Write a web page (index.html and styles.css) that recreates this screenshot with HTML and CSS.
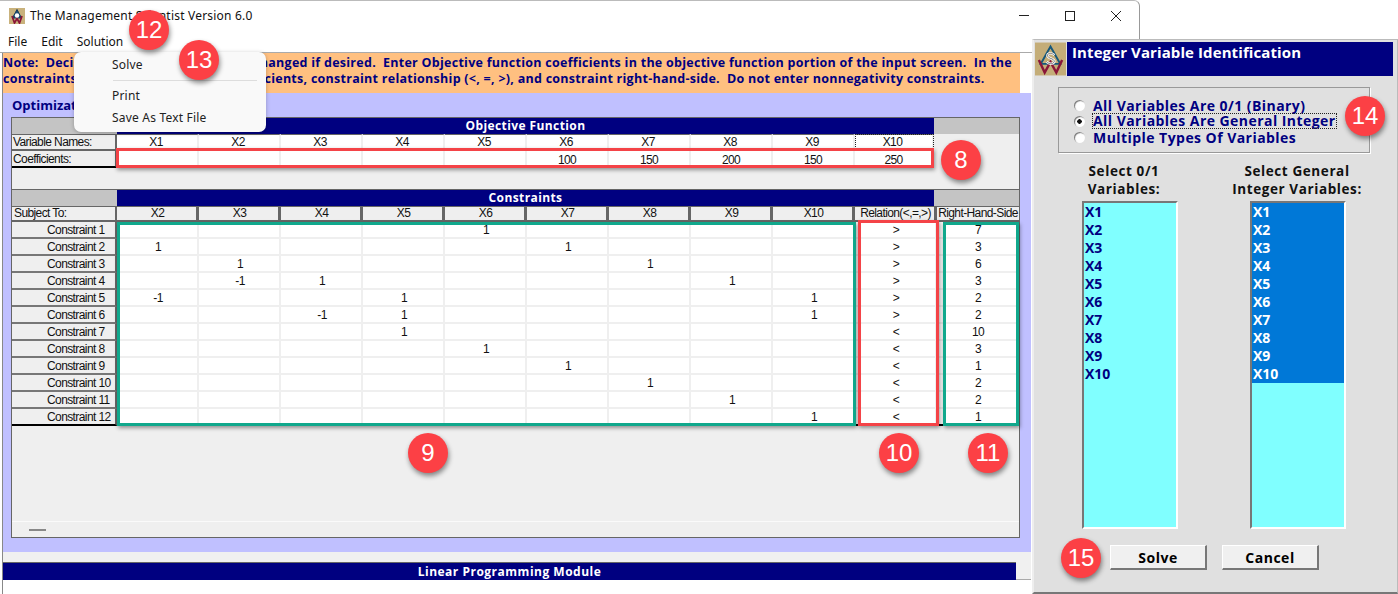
FILE: index.html
```html
<!DOCTYPE html>
<html lang="en">
<head>
<meta charset="UTF-8">
<meta name="viewport" content="width=device-width, initial-scale=1.0">
<title>The Management Scientist Version 6.0</title>
<link rel="stylesheet" href="styles.css">
</head>
<body>
    <div class="window">
        <div class="titlebar">
            <svg class="logo-small" viewBox="0 0 32 32"><rect width="32" height="32" fill="#c9b27c"/><path d="M16 3 L25 20 H7 Z" fill="#1d4f78" stroke="#12385a" stroke-width="2"/><path d="M6 16 L11 30 L16 21 L21 30 L26 16" fill="none" stroke="#8a1538" stroke-width="3.5"/><circle cx="16" cy="15" r="4.5" fill="#fff"/></svg>
            <span class="title-text">The Management Scientist Version 6.0</span>
            <div class="controls">
                <span class="ctl-min"></span>
                <span class="ctl-max"></span>
                <svg class="ctl-close" viewBox="0 0 10 10"><path d="M0 0 L10 10 M10 0 L0 10" stroke="#222" stroke-width="1" fill="none"/></svg>
            </div>
        </div>
        <div class="menubar">
            <span class="menu-file">File</span>
            <span class="menu-edit">Edit</span>
            <span>Solution</span>
        </div>
        <div class="content">
            <div class="note">
                <p>Note:&nbsp; Decision variable names can be changed if desired.&nbsp; Enter Objective function coefficients in the objective function portion of the input screen.&nbsp; In the</p>
                <p>constraints portion enter variable coefficients, constraint relationship (&lt;, =, &gt;), and constraint right-hand-side.&nbsp; Do not enter nonnegativity constraints.</p>
            </div>
            <div class="lavender">
                <div class="opt-title">Optimization</div>
                <div class="panel">
                    <div class="band"><span class="band-gray"></span><span class="band-navy">Objective Function</span><span class="band-rest"></span></div>
                    <table class="sheet obj">
                        <tr><th class="lead">Variable Names:</th><td>X1</td><td>X2</td><td>X3</td><td>X4</td><td>X5</td><td>X6</td><td>X7</td><td>X8</td><td>X9</td><td class="focus">X10</td><th class="rest"></th></tr>
                        <tr class="last"><th class="lead">Coefficients:</th><td></td><td></td><td></td><td></td><td></td><td>100</td><td>150</td><td>200</td><td>150</td><td>250</td><th class="rest"></th></tr>
                    </table>
                    <div class="gap"></div>
                    <div class="band"><span class="band-gray"></span><span class="band-navy">Constraints</span><span class="band-rest"></span></div>
                    <table class="sheet cons">
                        <tr class="head"><th class="lead">Subject To:</th><th>X2</th><th>X3</th><th>X4</th><th>X5</th><th>X6</th><th>X7</th><th>X8</th><th>X9</th><th>X10</th><th>Relation(&lt;,=,&gt;)</th><th class="rhs">Right-Hand-Side</th></tr>
                        <tr><th class="name">Constraint 1</th><td></td><td></td><td></td><td></td><td>1</td><td></td><td></td><td></td><td></td><td>&gt;</td><td>7</td></tr>
                        <tr><th class="name">Constraint 2</th><td>1</td><td></td><td></td><td></td><td></td><td>1</td><td></td><td></td><td></td><td>&gt;</td><td>3</td></tr>
                        <tr><th class="name">Constraint 3</th><td></td><td>1</td><td></td><td></td><td></td><td></td><td>1</td><td></td><td></td><td>&gt;</td><td>6</td></tr>
                        <tr><th class="name">Constraint 4</th><td></td><td>-1</td><td>1</td><td></td><td></td><td></td><td></td><td>1</td><td></td><td>&gt;</td><td>3</td></tr>
                        <tr><th class="name">Constraint 5</th><td>-1</td><td></td><td></td><td>1</td><td></td><td></td><td></td><td></td><td>1</td><td>&gt;</td><td>2</td></tr>
                        <tr><th class="name">Constraint 6</th><td></td><td></td><td>-1</td><td>1</td><td></td><td></td><td></td><td></td><td>1</td><td>&gt;</td><td>2</td></tr>
                        <tr><th class="name">Constraint 7</th><td></td><td></td><td></td><td>1</td><td></td><td></td><td></td><td></td><td></td><td>&lt;</td><td>10</td></tr>
                        <tr><th class="name">Constraint 8</th><td></td><td></td><td></td><td></td><td>1</td><td></td><td></td><td></td><td></td><td>&lt;</td><td>3</td></tr>
                        <tr><th class="name">Constraint 9</th><td></td><td></td><td></td><td></td><td></td><td>1</td><td></td><td></td><td></td><td>&lt;</td><td>1</td></tr>
                        <tr><th class="name">Constraint 10</th><td></td><td></td><td></td><td></td><td></td><td></td><td>1</td><td></td><td></td><td>&lt;</td><td>2</td></tr>
                        <tr><th class="name">Constraint 11</th><td></td><td></td><td></td><td></td><td></td><td></td><td></td><td>1</td><td></td><td>&lt;</td><td>2</td></tr>
                        <tr class="last"><th class="name">Constraint 12</th><td></td><td></td><td></td><td></td><td></td><td></td><td></td><td></td><td>1</td><td>&lt;</td><td>1</td></tr>
                    </table>
                    <div class="panel-foot"><div class="foot-strip"><span class="minus"></span></div></div>
                </div>
            </div>
            <div class="status-wrap">
                <div class="status">Linear Programming Module</div>
            </div>
        </div>
    </div>

    <!-- dropdown from the Solution menu -->
    <div class="dropdown">
        <div class="drop-item">Solve</div>
        <div class="drop-line"></div>
        <div class="drop-item">Print</div>
        <div class="drop-item">Save As Text File</div>
    </div>

    <!-- second window -->
    <div class="dialog">
        <div class="dlg-head">
            <svg class="logo-big" viewBox="0 0 32 34"><rect width="32" height="34" fill="#c4ad78"/><path d="M16 4 L26 22 H6 Z" fill="none" stroke="#17587a" stroke-width="2"/><path d="M4 18 L10 31 L16 20 L22 31 L28 18" fill="none" stroke="#8a1538" stroke-width="2.5"/><path d="M20 13 C17 10 12 11 13 14 C14 17 19 16 20 19 C20 22 15 23 12 20" fill="none" stroke="#fff" stroke-width="2.5"/><path d="M20 13 C17 10 12 11 13 14 C14 17 19 16 20 19 C20 22 15 23 12 20" fill="none" stroke="#222" stroke-width="0.6"/></svg>
            <div class="dlg-title">Integer Variable Identification</div>
        </div>
        <div class="group">
            <label class="opt"><input type="radio" name="kind"><span>All Variables Are 0/1 (Binary)</span></label>
            <label class="opt"><input type="radio" name="kind" checked><span class="dotted">All Variables Are General Integer</span></label>
            <label class="opt"><input type="radio" name="kind"><span>Multiple Types Of Variables</span></label>
        </div>
        <div class="lists">
            <div class="list-col">
                <div class="list-label">Select 0/1<br>Variables:</div>
                <ul class="list">
                    <li>X1</li><li>X2</li><li>X3</li><li>X4</li><li>X5</li><li>X6</li><li>X7</li><li>X8</li><li>X9</li><li>X10</li>
                </ul>
            </div>
            <div class="list-col">
                <div class="list-label">Select General<br>Integer Variables:</div>
                <ul class="list picked">
                    <li>X1</li><li>X2</li><li>X3</li><li>X4</li><li>X5</li><li>X6</li><li>X7</li><li>X8</li><li>X9</li><li>X10</li>
                </ul>
            </div>
        </div>
        <div class="buttons">
            <button class="btn">Solve</button>
            <button class="btn">Cancel</button>
        </div>
    </div>

    <!-- annotations drawn over the screenshot -->
    <div class="box red box-coef"></div>
    <div class="box green box-cells"></div>
    <div class="box red box-rel"></div>
    <div class="box green box-rhs"></div>
    <div class="badge b12">12</div>
    <div class="badge b13">13</div>
    <div class="badge b8">8</div>
    <div class="badge b9">9</div>
    <div class="badge b10">10</div>
    <div class="badge b11">11</div>
    <div class="badge b14">14</div>
    <div class="badge b15">15</div>
</body>
</html>
```
FILE: styles.css
```css
* {
    box-sizing: border-box;
}
html, body {
    margin: 0;
    height: 594px;
    overflow: hidden;
    background-color: white;
}
body {
    position: relative;
    font-family: "Liberation Sans", Arial, sans-serif;
}

/* main window */
.window {
    width: 1140px;
    height: 594px;
    border-top: 1px solid #bbb;
    border-right: 1px solid #999;
    border-top-right-radius: 6px;
    background-color: white;
    display: flex;
    flex-direction: column;
}
.titlebar {
    height: 29px;
    flex: none;
    display: flex;
    align-items: center;
    padding-left: 9px;
}
.logo-small {
    width: 16px;
    height: 16px;
    margin-right: 5px;
}
.title-text {
    font-family: "Noto Sans", sans-serif;
    font-size: 12px;
    letter-spacing: 0.2px;
    color: #111;
}
.controls {
    margin-left: auto;
    display: flex;
    align-items: center;
}
.ctl-min {
    width: 10px;
    height: 1px;
    background-color: #222;
    margin-right: 36px;
}
.ctl-max {
    width: 10px;
    height: 10px;
    border: 1px solid #222;
    margin-right: 36px;
}
.ctl-close {
    width: 10px;
    height: 10px;
    margin-right: 18px;
}
.menubar {
    height: 23px;
    flex: none;
    display: flex;
    align-items: center;
    padding-left: 8px;
    font-family: "Noto Sans", sans-serif;
    font-size: 12px;
    color: #111;
    border-bottom: 1px solid #aaa;
}
.menu-file {
    margin-right: 14px;
}
.menu-edit {
    margin-right: 14px;
}

.content {
    flex: 1;
    margin-left: 2px;
    display: flex;
    flex-direction: column;
    background-color: white;
    border-left: 1px solid #888;
}
.note {
    height: 40px;
    width: 1017px;
    background-color: #ffc080;
    color: #000080;
    font-family: "Open Sans", sans-serif;
    font-weight: bold;
    font-size: 12.5px;
    letter-spacing: 0.27px;
    line-height: 16px;
    padding: 2px 0 0 0;
    white-space: nowrap;
    overflow: hidden;
}
.note p {
    margin: 0;
}
.lavender {
    height: 459px;
    width: 1028px;
    background-color: #c0c0ff;
    padding: 0 0 0 8px;
}
.opt-title {
    height: 24px;
    padding: 3px 0 0 1px;
    color: #000080;
    font-family: "Open Sans", sans-serif;
    font-weight: bold;
    font-size: 13px;
}

/* the input sheet */
.panel {
    width: 1009px;
    height: 421px;
    border: 1px solid #666;
    background-color: #efefef;
    color: #111;
}
.band {
    display: flex;
    height: 16px;
}
.band-gray {
    width: 105px;
    background-color: #c4c4c4;
}
.band-navy {
    width: 817px;
    background-color: #000080;
    color: white;
    font-family: "Open Sans", sans-serif;
    font-weight: bold;
    font-size: 12px;
    letter-spacing: 0.4px;
    line-height: 16px;
    text-align: center;
}
.band-rest {
    flex: 1;
    background-color: #c4c4c4;
}
.sheet {
    border-collapse: separate;
    border-spacing: 0;
    table-layout: fixed;
    width: 1007px;
}
.sheet th, .sheet td {
    height: 17px;
    padding: 1px 0 0 0;
    font-weight: normal;
    font-size: 12px;
    letter-spacing: -0.6px;
    line-height: 13px;
    text-align: center;
    white-space: nowrap;
    overflow: hidden;
}
.sheet td {
    width: 82px;
    background-color: white;
    border-right: 2px solid #efefef;
    border-bottom: 2px solid #efefef;
}
.cons td {
    padding-left: 2px;
}
.sheet th {
    background-color: #efefef;
}
.sheet .lead {
    width: 105px;
    text-align: left;
    padding-left: 1px;
    border-right: 2px solid #666;
    border-bottom: 2px solid #666;
}
.obj tr:first-child td, .obj tr:first-child th {
    height: 16px;
    border-top: 1px solid #666;
    padding-right: 2px;
}
.obj .last td, .obj .last th {
    padding-top: 2px;
}
.obj .focus {
    width: 79px;
    outline: 1px dotted #222;
    outline-offset: -1px;
}
.obj .rest {
    width: 85px;
    border: 0 !important;
}
.obj .last td {
    border-bottom: 0;
}
.gap {
    height: 22px;
    border-bottom: 1px solid #666;
}
.head th {
    height: 16px;
    width: 82px;
    padding: 0 0 0 2px;
    border-top: 1px solid #666;
    border-right: 3px solid #666;
    border-bottom: 2px solid #666;
}
.head .lead {
    width: 105px;
    padding-left: 2px;
}
.head .rhs {
    border-right: 0;
    padding-left: 0;
}
.name {
    text-align: left !important;
    padding-left: 35px !important;
    border-bottom: 2px solid #777;
    border-right: 2px solid #666;
}
.last .name, .last .lead {
    border-bottom: 2px solid black;
}
.cons .last td {
    border-bottom: 2px solid black;
}
.panel-foot {
    height: 112px;
    display: flex;
    align-items: flex-end;
}
.foot-strip {
    width: 100%;
    height: 17px;
    border-top: 1px solid #fafafa;
    padding: 7px 0 0 17px;
}
.minus {
    display: block;
    width: 17px;
    height: 2px;
    background-color: #888;
}
.status-wrap {
    height: 28px;
    width: 1028px;
    background-color: #f0f0f0;
    border-bottom: 1px solid #aaa;
    padding-top: 10px;
}
.status {
    width: 1013px;
    height: 18px;
    background-color: #000080;
    border-top: 1px solid #666;
    color: white;
    font-family: "Open Sans", sans-serif;
    font-weight: bold;
    font-size: 12px;
    letter-spacing: 0.5px;
    line-height: 17px;
    text-align: center;
}

/* Solution menu */
.dropdown {
    position: absolute;
    left: 74px;
    top: 52px;
    width: 192px;
    height: 80px;
    background-color: #f9f9f9;
    border-radius: 7px;
    box-shadow: 0 1px 4px rgba(0, 0, 0, 0.25);
    font-family: "Noto Sans", sans-serif;
    font-size: 12px;
    letter-spacing: 0.2px;
    color: #222;
    padding-top: 3px;
}
.drop-item {
    height: 22px;
    line-height: 20px;
    padding-left: 38px;
}
.drop-line {
    height: 1px;
    margin: 3px 9px 5px 39px;
    background-color: #ddd;
}

/* Integer Variable Identification */
.dialog {
    position: absolute;
    left: 1032px;
    top: 39px;
    width: 366px;
    height: 555px;
    background-color: #e0e0e0;
    border: 1px solid #bbb;
    border-bottom: 2px solid #777;
    border-left: 2px solid #eee;
}
.dlg-head {
    display: flex;
    height: 34px;
    margin: 2px 4px 0 1px;
    gap: 1px;
}
.logo-big {
    width: 31px;
    height: 34px;
}
.dlg-title {
    flex: 1;
    background-color: #000080;
    color: white;
    font-family: "Open Sans", sans-serif;
    font-weight: bold;
    font-size: 15px;
    letter-spacing: 0.1px;
    line-height: 21px;
    padding-left: 5px;
}
.group {
    width: 312px;
    height: 66px;
    margin: 11px 0 0 24px;
    border: 1px solid #999;
    box-shadow: 1px 1px 0 #fff;
    padding: 9px 0 0 15px;
    color: #000080;
    font-family: "Open Sans", sans-serif;
    font-weight: bold;
    font-size: 14px;
    letter-spacing: 0.45px;
}
.opt {
    display: flex;
    align-items: center;
    height: 16px;
    white-space: nowrap;
}
.opt input {
    appearance: none;
    width: 11px;
    height: 11px;
    margin: 0 8px 0 0;
    flex: none;
    border-radius: 50%;
    background-color: white;
    box-shadow: inset 1px 1px 1px #777;
}
.opt input:checked {
    background: radial-gradient(circle, #111 2px, white 2.5px);
}
.dotted {
    outline: 1px dotted #222;
    line-height: 14px;
}
.lists {
    display: flex;
    margin-top: 9px;
    padding-left: 48px;
    gap: 72px;
}
.list-col {
    width: 96px;
    display: flex;
    flex-direction: column;
    align-items: center;
}
.list-label {
    height: 39px;
    font-family: "Open Sans", sans-serif;
    font-weight: bold;
    font-size: 13.5px;
    letter-spacing: 0.6px;
    line-height: 18px;
    text-align: center;
    white-space: nowrap;
    color: #111;
    margin-right: 2px;
}
.list-col:first-child .list-label {
    margin-right: 12px;
}
.list {
    list-style: none;
    margin: 0;
    width: 96px;
    height: 328px;
    padding: 0;
    background-color: #80ffff;
    border-left: 2px solid #777;
    border-top: 2px solid #777;
    border-right: 2px solid white;
    border-bottom: 2px solid white;
    color: #000080;
    font-family: "Open Sans", sans-serif;
    font-weight: bold;
    font-size: 14px;
}
.list li {
    height: 18px;
    line-height: 18px;
    padding-left: 1px;
}
.picked li {
    background-color: #0078d7;
    color: white;
}
.buttons {
    display: flex;
    gap: 15px;
    margin: 16px 0 0 76px;
}
.btn {
    width: 97px;
    height: 25px;
    padding: 0;
    background-color: #f0f0f0;
    border: 1px solid #fff;
    border-right: 2px solid #777;
    border-bottom: 2px solid #777;
    font-family: "Open Sans", sans-serif;
    font-weight: bold;
    font-size: 14px;
    letter-spacing: 0.5px;
    color: black;
}

/* annotation rectangles */
.box {
    position: absolute;
    border: 3px solid;
    box-shadow: 1px 2px 4px rgba(0, 0, 0, 0.4);
}
.red {
    border-color: #f44347;
}
.green {
    border-color: #10a88c;
}
.box-coef {
    left: 116px;
    top: 148px;
    width: 818px;
    height: 20px;
}
.box-cells {
    left: 117px;
    top: 222px;
    width: 739px;
    height: 204px;
}
.box-rel {
    left: 858px;
    top: 220px;
    width: 81px;
    height: 206px;
}
.box-rhs {
    left: 943px;
    top: 222px;
    width: 76px;
    height: 204px;
}

/* numbered circles */
.badge {
    position: absolute;
    width: 40px;
    height: 40px;
    border-radius: 50%;
    background-color: #fc4045;
    color: white;
    font-family: "Liberation Sans", Arial, sans-serif;
    font-size: 24px;
    line-height: 40px;
    text-align: center;
    box-shadow: 1px 3px 5px rgba(0, 0, 0, 0.45);
}
.b12 { left: 129px; top: 10px; }
.b13 { left: 179px; top: 40px; }
.b8 { left: 941px; top: 140px; }
.b9 { left: 408px; top: 433px; }
.b10 { left: 879px; top: 433px; }
.b11 { left: 968px; top: 433px; }
.b14 { left: 1345px; top: 96px; }
.b15 { left: 1061px; top: 538px; }
```
